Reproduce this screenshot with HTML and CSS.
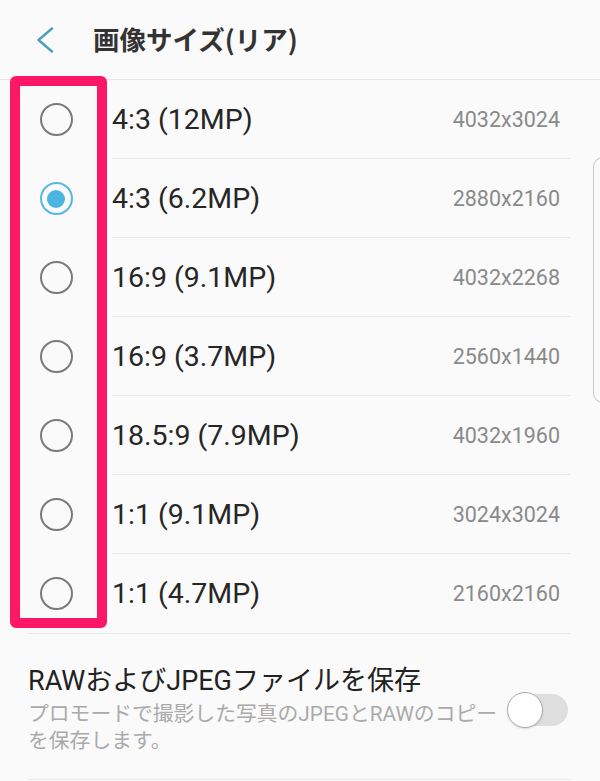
FILE: index.html
```html
<!DOCTYPE html>
<html lang="ja">
<head>
<meta charset="UTF-8">
<meta name="viewport" content="width=device-width, initial-scale=1.0">
<title>画像サイズ(リア)</title>
<link rel="stylesheet" href="styles.css">
</head>
<body>
<div class="screen">
  <div class="header">
    <svg class="back" width="20" height="28" viewBox="0 0 20 28">
      <polyline points="16,2.5 2.5,14 16,25.5" fill="none" stroke="#4c9fba" stroke-width="2.4" stroke-linecap="round" stroke-linejoin="round"/>
    </svg>
    <h1 class="title">画像サイズ(リア)</h1>
  </div>

  <div class="list">
    <div class="row">
      <div class="radio-cell"><span class="radio"></span></div>
      <div class="row-body"><span class="label">4:3 (12MP)</span><span class="value">4032x3024</span></div>
    </div>
    <div class="row">
      <div class="radio-cell"><span class="radio checked"></span></div>
      <div class="row-body"><span class="label">4:3 (6.2MP)</span><span class="value">2880x2160</span></div>
    </div>
    <div class="row">
      <div class="radio-cell"><span class="radio"></span></div>
      <div class="row-body"><span class="label">16:9 (9.1MP)</span><span class="value">4032x2268</span></div>
    </div>
    <div class="row">
      <div class="radio-cell"><span class="radio"></span></div>
      <div class="row-body"><span class="label">16:9 (3.7MP)</span><span class="value">2560x1440</span></div>
    </div>
    <div class="row">
      <div class="radio-cell"><span class="radio"></span></div>
      <div class="row-body"><span class="label">18.5:9 (7.9MP)</span><span class="value">4032x1960</span></div>
    </div>
    <div class="row">
      <div class="radio-cell"><span class="radio"></span></div>
      <div class="row-body"><span class="label">1:1 (9.1MP)</span><span class="value">3024x3024</span></div>
    </div>
    <div class="row last">
      <div class="radio-cell"><span class="radio"></span></div>
      <div class="row-body"><span class="label">1:1 (4.7MP)</span><span class="value">2160x2160</span></div>
    </div>
  </div>
  <div class="divider"></div>

  <div class="setting">
    <div class="setting-text">
      <div class="setting-title">RAWおよびJPEGファイルを保存</div>
      <div class="setting-desc">プロモードで撮影した写真のJPEGとRAWのコピーを保存します。</div>
    </div>
    <div class="switch">
      <span class="track"></span>
      <span class="thumb"></span>
    </div>
  </div>
  <div class="divider"></div>

  <div class="scroll-hint"></div>
  <div class="highlight"></div>
</div>
</body>
</html>
```

FILE: styles.css
```css
html, body {
  margin: 0;
  padding: 0;
  background-color: #fafafa;
  overflow: hidden;
}
body {
  font-family: Roboto, "Noto Sans CJK JP", sans-serif;
  color: #1a1a1a;
}
.screen {
  position: relative;
  width: 600px;
  height: 781px;
}
.header {
  display: flex;
  align-items: center;
  height: 79px;
  border-bottom: 1px solid #e6e6e6;
}
.back {
  margin-left: 36px;
  flex-shrink: 0;
}
.title {
  margin: 0 0 0 37px;
  font-family: "Noto Sans CJK JP", sans-serif;
  font-size: 26.5px;
  font-weight: bold;
  color: #333333;
  line-height: 1;
}
.row {
  display: flex;
  height: 79px;
  padding-right: 30px;
}
.radio-cell {
  width: 112px;
  display: flex;
  align-items: center;
  justify-content: center;
  flex-shrink: 0;
}
.radio {
  box-sizing: border-box;
  width: 33px;
  height: 33px;
  border: 2px solid #7a7a7a;
  border-radius: 50%;
  display: flex;
  align-items: center;
  justify-content: center;
}
.radio.checked {
  border: 2.5px solid #55b9e0;
}
.radio.checked::after {
  content: "";
  width: 18px;
  height: 18px;
  border-radius: 50%;
  background-color: #4bb4e0;
}
.row-body {
  flex: 1;
  display: flex;
  align-items: center;
  justify-content: space-between;
  padding-right: 10px;
  border-bottom: 1px solid #e8e8e8;
}
.row.last .row-body {
  border-bottom: none;
}
.label {
  font-size: 28.5px;
  color: #262626;
}
.value {
  font-size: 21.5px;
  color: #8a8a8a;
}
.divider {
  height: 1px;
  margin: 0 30px 0 28px;
  background-color: #e8e8e8;
}
.setting {
  display: flex;
  align-items: center;
  padding: 30px 32px 24px 28px;
}
.setting-text {
  flex: 1;
}
.setting-title {
  font-size: 27px;
  line-height: 34px;
  color: #222222;
}
.setting-desc {
  margin-top: 3px;
  font-size: 20.8px;
  line-height: 27px;
  color: #aaaaaa;
}
.switch {
  position: relative;
  width: 61px;
  height: 36px;
  margin-left: 4px;
  display: flex;
  align-items: center;
  justify-content: flex-end;
  flex-shrink: 0;
}
.track {
  width: 53px;
  height: 32px;
  border-radius: 16px;
  background-color: #dedede;
}
.thumb {
  position: absolute;
  left: 0;
  top: 0;
  box-sizing: border-box;
  width: 36px;
  height: 36px;
  border-radius: 50%;
  background-color: #ffffff;
  border: 1.5px solid #acacac;
  box-shadow: 0 1px 2px rgba(0, 0, 0, 0.12);
}
/* scroll indicator, partly off screen */
.scroll-hint {
  position: absolute;
  left: 593px;
  top: 157px;
  width: 24px;
  height: 246px;
  box-sizing: border-box;
  border: 1.5px solid #c8c8c8;
  border-radius: 10px;
}
/* pink annotation frame over the radio column */
.highlight {
  position: absolute;
  left: 10px;
  top: 76px;
  width: 97px;
  height: 552px;
  box-sizing: border-box;
  border: 10px solid #fd1866;
  border-radius: 6px;
}
```
